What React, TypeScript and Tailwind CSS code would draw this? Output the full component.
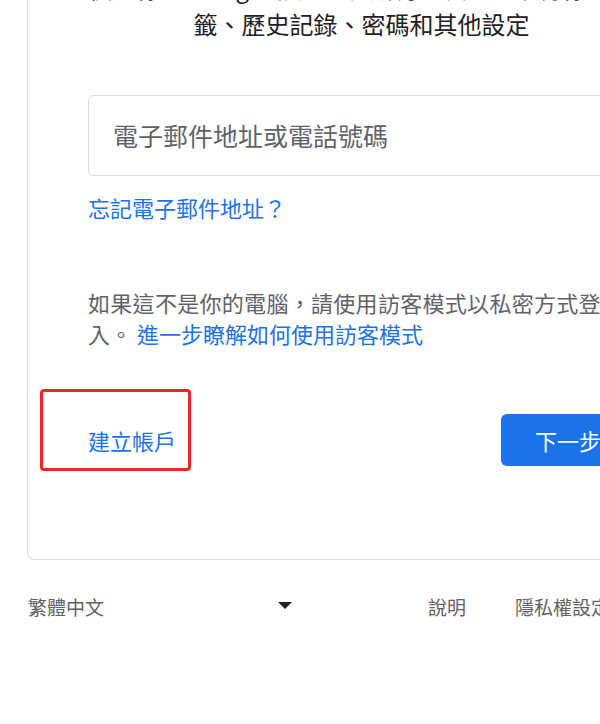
import React from "react";

export default function App() {
  const font = { fontFamily: '"Noto Sans CJK TC", "Noto Sans", Roboto, sans-serif' };
  return (
    <div
      className="relative w-[600px] h-[724px] overflow-hidden bg-white"
      style={font}
    >
      <div className="ml-[27px] w-[669px] border border-t-0 border-[#dadce0] rounded-b-[8px] px-[60px] pb-[93px]">
        <div className="-mt-[30px] text-center text-[24px] leading-[36px] text-[#202124]">
          <div className="whitespace-nowrap">使用你的 Google 帳戶，在所有的裝置上取得你的書</div>
          <div className="whitespace-nowrap">籤、歷史記錄、密碼和其他設定</div>
        </div>

        <div className="mt-[53px] h-[81px] border border-[#dadce0] rounded-[6px] flex items-center pl-[24px] text-[25px] text-[#5f6368]">
          電子郵件地址或電話號碼
        </div>

        <div className="mt-[16px] text-[22px] leading-[30px] text-[#1a73e8]">
          忘記電子郵件地址？
        </div>

        <div className="mt-[65px] text-[22px] leading-[31px] text-[#5f6368]">
          <div className="whitespace-nowrap tracking-[0.3px]">如果這不是你的電腦，請使用訪客模式以私密方式登</div>
          <div className="whitespace-nowrap">
            入。 <span className="text-[#1a73e8]">進一步瞭解如何使用訪客模式</span>
          </div>
        </div>

        <div className="mt-[65px] flex items-center justify-between">
          <div className="relative text-[22px] leading-[30px] text-[#1a73e8]">
            建立帳戶
            <div className="absolute -left-[48px] -top-[36px] w-[151px] h-[82px] border-[3px] border-[#ea2a22] rounded-[4px]" />
          </div>
          <div className="w-[134px] h-[52px] rounded-[6px] bg-[#1a73e8] text-white text-[22px] flex items-center justify-center">
            下一步
          </div>
        </div>
      </div>

      <div className="mt-[32px] ml-[28px] w-[700px] flex items-center text-[19px] leading-[30px] text-[#5f6368]">
        <div className="w-[264px] shrink-0 flex items-center justify-between">
          <span className="whitespace-nowrap">繁體中文</span>
          <span className="w-0 h-0 border-l-[7px] border-r-[7px] border-t-[7px] border-l-transparent border-r-transparent border-t-[#202124] -mt-[4px]" />
        </div>
        <span className="ml-[136px] shrink-0 whitespace-nowrap">說明</span>
        <span className="ml-[49px] shrink-0 whitespace-nowrap">隱私權設定</span>
      </div>
    </div>
  );
}
